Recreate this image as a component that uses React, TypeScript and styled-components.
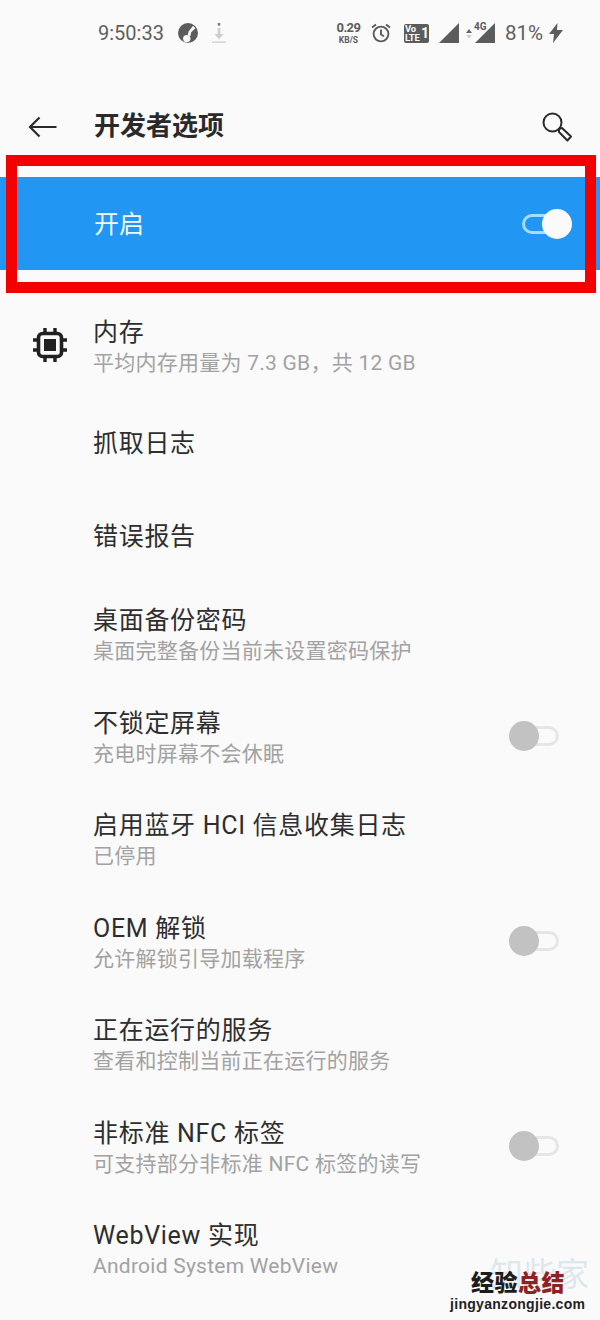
import React from "react";
import styled, { createGlobalStyle } from "styled-components";

const GlobalStyle = createGlobalStyle`
  html, body {
    margin: 0;
    padding: 0;
    background: #fafafa;
  }
  body {
    font-family: Roboto, "Noto Sans CJK SC", sans-serif;
  }
`;

type Item = {
  title: string;
  sub?: string;
  toggle?: boolean;
  chip?: boolean;
};

const items: Item[] = [
  { title: "内存", sub: "平均内存用量为 7.3 GB，共 12 GB", chip: true },
  { title: "抓取日志" },
  { title: "错误报告" },
  { title: "桌面备份密码", sub: "桌面完整备份当前未设置密码保护" },
  { title: "不锁定屏幕", sub: "充电时屏幕不会休眠", toggle: true },
  { title: "启用蓝牙 HCI 信息收集日志", sub: "已停用" },
  { title: "OEM 解锁", sub: "允许解锁引导加载程序", toggle: true },
  { title: "正在运行的服务", sub: "查看和控制当前正在运行的服务" },
  { title: "非标准 NFC 标签", sub: "可支持部分非标准 NFC 标签的读写", toggle: true },
  { title: "WebView 实现", sub: "Android System WebView" },
];

const App = () => {
  return (
    <Page>
      <GlobalStyle />
      <StatusBar>
        <StatusLeft>
          <Time>9:50:33</Time>
          <svg width="20" height="20" viewBox="0 0 20 20">
            <circle cx="10" cy="10" r="10" fill="#5c5c5c" />
            <path d="M15 2.8L10.6 8.6 9.6 12.6 12.4 13 13.2 9.2 17.4 5.2z" fill="#fafafa" />
            <circle cx="8.8" cy="15.6" r="3.7" fill="#fafafa" />
          </svg>
          <DownloadIcon width="16" height="22" viewBox="0 0 16 22">
            <rect x="6.8" y="1" width="2.4" height="2.6" fill="#777" />
            <path d="M6.6 6h2.8v6h3.2L8 17.2 3.4 12h3.2z" fill="#cfcfcf" />
            <rect x="1" y="19.4" width="14" height="1.6" fill="#d6d6d6" />
          </DownloadIcon>
        </StatusLeft>
        <StatusRight>
          <Speed>
            <b>0.29</b>
            <small>KB/S</small>
          </Speed>
          <svg width="22" height="22" viewBox="0 0 22 22" fill="none" stroke="#5c5c5c" strokeWidth="1.9">
            <circle cx="11" cy="12" r="7.4" />
            <path d="M11 7.5V12.5l3 1.8M2 5.6L6 2.4M20 5.6L16 2.4" />
          </svg>
          <VolteBadge>
            <VolteText>
              <span>Vo</span>
              <span>LTE</span>
            </VolteText>
            <VolteSim>1</VolteSim>
          </VolteBadge>
          <svg width="20" height="20" viewBox="0 0 20 20">
            <path d="M20 0v20H0z" fill="#5c5c5c" />
          </svg>
          <SignalGroup>
            <svg width="8" height="20" viewBox="0 0 8 20">
              <path d="M4 6l3 4H1z" fill="#666" />
              <path d="M4 15.5l-3-3.5h6z" fill="#cfcfcf" />
            </svg>
            <FourG>4G</FourG>
            <svg width="20" height="20" viewBox="0 0 20 20">
              <path d="M20 0v20H0z" fill="#5c5c5c" />
            </svg>
          </SignalGroup>
          <Battery>81%</Battery>
          <BoltIcon width="14" height="20" viewBox="0 0 14 20">
            <path d="M8.5 0L0 11h5l-1 9 10-13H8z" fill="#5c5c5c" />
          </BoltIcon>
        </StatusRight>
      </StatusBar>

      <Toolbar>
        <svg width="30" height="22" viewBox="0 0 30 22" fill="none" stroke="#2a2a2a" strokeWidth="2.2">
          <path d="M28.5 11H2M11.5 1.5L2 11l9.5 9.5" />
        </svg>
        <PageTitle>开发者选项</PageTitle>
        <svg width="32" height="32" viewBox="0 0 32 32" fill="none" stroke="#2a2a2a" strokeWidth="2">
          <circle cx="11.5" cy="11.5" r="9" />
          <path d="M18 18l3-1 9 8.5-3.6 4L18 21z" strokeLinejoin="round" />
        </svg>
      </Toolbar>

      <MainSwitch>
        <SwitchLabel>开启</SwitchLabel>
        <Switch $on />
      </MainSwitch>

      <List>
        {items.map((item) => (
          <Row key={item.title} $tall={!!item.sub}>
            <IconCell>
              {item.chip && (
                <svg width="36" height="36" viewBox="0 0 36 36" fill="none" stroke="#212121">
                  <rect x="6.5" y="6.5" width="23" height="23" rx="4" strokeWidth="3.6" />
                  <rect x="12" y="12" width="12" height="12" fill="#212121" strokeWidth="0" />
                  <path
                    d="M13 1v5M23 1v5M13 30v5M23 30v5M1 13h5M1 23h5M30 13h5M30 23h5"
                    strokeWidth="3.4"
                  />
                </svg>
              )}
            </IconCell>
            <RowText $tall={!!item.sub}>
              <RowTitle>{item.title}</RowTitle>
              {item.sub && <RowSub>{item.sub}</RowSub>}
            </RowText>
            {item.toggle && <Switch />}
          </Row>
        ))}
      </List>

      <RedFrame />
      <Watermark>
        <FaintMark>知些家</FaintMark>
        <BrandName>
          经验<em>总结</em>
        </BrandName>
        <BrandUrl>jingyanzongjie.com</BrandUrl>
      </Watermark>
    </Page>
  );
};

export default App;

const Page = styled.div`
  position: relative;
  width: 600px;
  height: 1320px;
  overflow: hidden;
  background: #fafafa;
`;

const StatusBar = styled.div`
  height: 66px;
  display: flex;
  justify-content: space-between;
  align-items: center;
  padding: 0 37px 0 98px;
  box-sizing: border-box;
`;

const StatusLeft = styled.div`
  display: flex;
  align-items: center;
  gap: 12px;
`;

const Time = styled.span`
  font-size: 20px;
  color: #5f5f5f;
  width: 68px;
`;

const DownloadIcon = styled.svg`
  margin-left: 1px;
`;

const StatusRight = styled.div`
  display: flex;
  align-items: center;
  gap: 10px;
`;

const Speed = styled.div`
  display: flex;
  flex-direction: column;
  align-items: center;
  color: #5c5c5c;
  width: 23px;
  line-height: 1;

  b {
    font-size: 13px;
    font-weight: 700;
    letter-spacing: -0.6px;
  }

  small {
    font-size: 8.5px;
    font-weight: 700;
    margin-top: 2px;
  }
`;

const VolteBadge = styled.div`
  width: 25px;
  height: 19px;
  background: #5c5c5c;
  border-radius: 2px;
  display: flex;
  align-items: center;
  color: #fafafa;
  font-weight: 700;
  line-height: 1;
  margin-left: 2px;
  overflow: hidden;
`;

const VolteText = styled.div`
  display: flex;
  flex-direction: column;
  font-size: 9.5px;
  line-height: 0.95;
  width: 17px;
  padding-left: 1px;
  letter-spacing: -0.2px;
`;

const VolteSim = styled.span`
  font-size: 14px;
`;

const SignalGroup = styled.div`
  position: relative;
  display: flex;
  align-items: center;
  gap: 2px;
  margin-left: -4px;
`;

const FourG = styled.span`
  position: absolute;
  left: 9px;
  top: -2px;
  font-size: 10px;
  font-weight: 700;
  color: #5c5c5c;
`;

const Battery = styled.span`
  font-size: 20.5px;
  color: #5f5f5f;
`;

const BoltIcon = styled.svg`
  margin-left: -4px;
`;

const Toolbar = styled.div`
  height: 111px;
  display: flex;
  align-items: center;
  padding: 10px 27px 0 28px;
  box-sizing: border-box;
`;

const PageTitle = styled.h1`
  flex: 1;
  margin: 0 0 0 36px;
  font-size: 26px;
  font-weight: 700;
  color: #2a2a2a;
  line-height: 1.2;
`;

const MainSwitch = styled.div`
  height: 93px;
  background: #2196f3;
  display: flex;
  align-items: center;
  justify-content: space-between;
  padding: 0 30px 0 94px;
  box-sizing: border-box;
`;

const SwitchLabel = styled.span`
  font-size: 25px;
  color: #eef8ff;
  margin-bottom: 4px;
`;

const Switch = styled.div<{ $on?: boolean }>`
  position: relative;
  width: 48px;
  height: 20px;
  box-sizing: border-box;
  border: 3px solid ${(props) => (props.$on ? "#a5dcff" : "#e6e6e6")};
  border-radius: 10px;
  flex-shrink: 0;
  margin: ${(props) => (props.$on ? "0" : "0 13px 3px 0")};

  &::after {
    content: "";
    position: absolute;
    top: -8px;
    ${(props) => (props.$on ? "right: -5px;" : "left: -5px;")}
    width: 30px;
    height: 30px;
    border-radius: 50%;
    background: ${(props) => (props.$on ? "#fafafa" : "#c2c2c2")};
  }
`;

const List = styled.div`
  padding-top: 26px;
`;

const Row = styled.div<{ $tall: boolean }>`
  height: ${(props) => (props.$tall ? "102.5px" : "92.7px")};
  display: flex;
  align-items: center;
  padding-right: 28px;
  box-sizing: border-box;
`;

const IconCell = styled.div`
  width: 93px;
  padding: 0 0 4px 32px;
  box-sizing: border-box;
  flex-shrink: 0;
  display: flex;
  align-items: center;
`;

const RowText = styled.div<{ $tall: boolean }>`
  flex: 1;
  min-width: 0;
  padding: ${(props) => (props.$tall ? "2px 0 0" : "0 0 2px")};
`;

const RowTitle = styled.div`
  font-size: 25px;
  line-height: 30px;
  color: #2e2e2e;
  letter-spacing: 0.7px;
`;

const RowSub = styled.div`
  font-size: 21px;
  line-height: 30px;
  color: #a2a2a2;
  letter-spacing: 0.25px;
`;

const RedFrame = styled.div`
  position: absolute;
  left: 6px;
  top: 155px;
  width: 590px;
  height: 138px;
  box-sizing: border-box;
  border: 11px solid #f50000;
  pointer-events: none;
`;

const Watermark = styled.div`
  position: absolute;
  right: 0;
  bottom: 0;
  width: 200px;
  height: 90px;
`;

const FaintMark = styled.div`
  position: absolute;
  left: 90px;
  top: 28px;
  font-size: 33px;
  color: #dde8ec;
  line-height: 1;
  white-space: nowrap;
`;

const BrandName = styled.div`
  position: absolute;
  left: 71px;
  top: 42px;
  font-size: 23px;
  font-weight: 900;
  line-height: 1;
  letter-spacing: 0.5px;
  color: #1c1c1c;
  white-space: nowrap;

  em {
    font-style: normal;
    color: #8e2222;
  }
`;

const BrandUrl = styled.div`
  position: absolute;
  left: 50px;
  top: 66px;
  font-family: "Liberation Sans", sans-serif;
  font-size: 14px;
  font-weight: 700;
  line-height: 1.2;
  letter-spacing: 0.3px;
  color: #222;
  white-space: nowrap;
`;
